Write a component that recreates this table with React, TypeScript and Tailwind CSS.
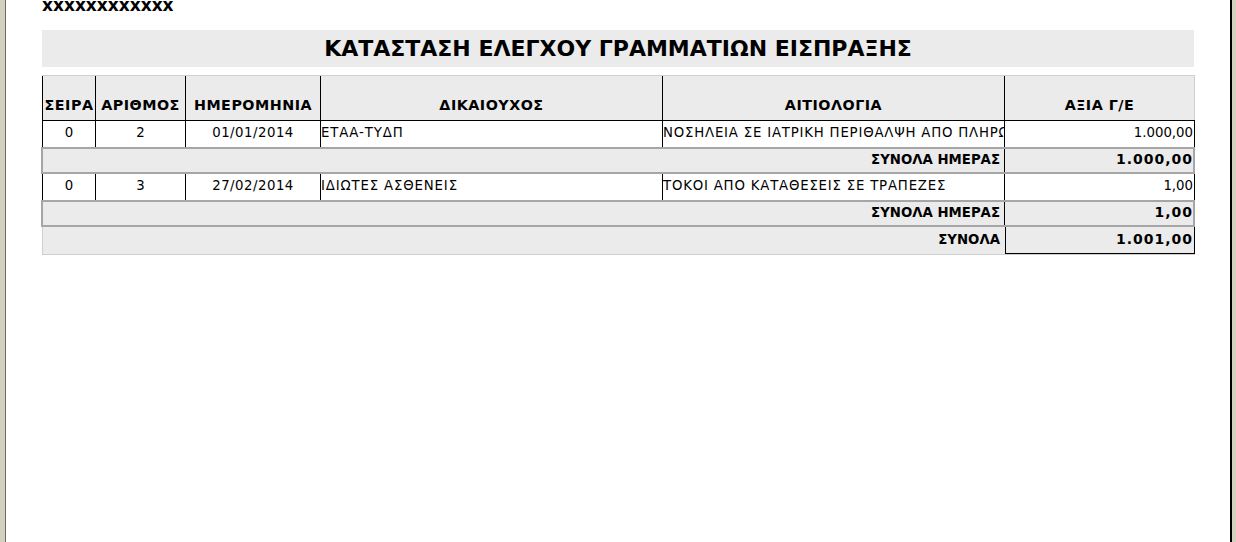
const cols = 'grid grid-cols-[54px_90px_135px_342px_342px_190px]';

type Row = {
  seira: string;
  arithmos: string;
  date: string;
  dikaiouxos: string;
  aitiologia: string;
  axia: string;
};

const rows: { item: Row; dayTotal: string }[] = [
  {
    item: {
      seira: '0',
      arithmos: '2',
      date: '01/01/2014',
      dikaiouxos: 'ΕΤΑΑ-ΤΥΔΠ',
      aitiologia: 'ΝΟΣΗΛΕΙΑ ΣΕ ΙΑΤΡΙΚΗ ΠΕΡΙΘΑΛΨΗ ΑΠΟ ΠΛΗΡΩΜΗ',
      axia: '1.000,00',
    },
    dayTotal: '1.000,00',
  },
  {
    item: {
      seira: '0',
      arithmos: '3',
      date: '27/02/2014',
      dikaiouxos: 'ΙΔΙΩΤΕΣ ΑΣΘΕΝΕΙΣ',
      aitiologia: 'ΤΟΚΟΙ ΑΠΟ ΚΑΤΑΘΕΣΕΙΣ ΣΕ ΤΡΑΠΕΖΕΣ',
      axia: '1,00',
    },
    dayTotal: '1,00',
  },
];

function HeaderRow() {
  const heads = ['ΣΕΙΡΑ', 'ΑΡΙΘΜΟΣ', 'ΗΜΕΡΟΜΗΝΙΑ', 'ΔΙΚΑΙΟΥΧΟΣ', 'ΑΙΤΙΟΛΟΓΙΑ', 'ΑΞΙΑ Γ/Ε'];
  return (
    <div className={`${cols} h-[45px] bg-[#ebebeb] border-t border-[#cfcfcf]`}>
      {heads.map((h, i) => (
        <div
          key={h}
          className={`flex items-end justify-center pb-[6px] text-[14.3px] font-bold tracking-[0.5px] whitespace-nowrap ${
            i === 0 ? 'border-l border-[#cfcfcf]' : ''
          } ${i === heads.length - 1 ? 'border-r border-[#cfcfcf]' : 'border-r border-black'}`}
        >
          {h}
        </div>
      ))}
    </div>
  );
}

function DataRow({ item, first }: { item: Row; first: boolean }) {
  return (
    <div className={`${cols} bg-white ${first ? 'h-[27px] border-t border-black' : 'h-[26px]'}`}>
      <div className="border-l border-r border-black text-center pt-[3px]">{item.seira}</div>
      <div className="border-r border-black text-center pt-[3px]">{item.arithmos}</div>
      <div className="border-r border-black text-center pt-[3px] tracking-[0.5px]">{item.date}</div>
      <div className="border-r border-black pt-[3px] overflow-hidden whitespace-nowrap tracking-[0.85px]">
        {item.dikaiouxos}
      </div>
      <div className="border-r border-black pt-[3px] overflow-hidden whitespace-nowrap tracking-[0.8px]">
        {item.aitiologia}
      </div>
      <div className="border-r border-black pt-[3px] pr-[1px] text-right">{item.axia}</div>
    </div>
  );
}

function SumRow({ label, value, last }: { label: string; value: string; last?: boolean }) {
  if (last) {
    return (
      <div className="flex h-[28px] bg-[#ebebeb] border-b border-l border-[#cfcfcf] font-bold">
        <div className="flex-1 text-right pr-[5px] pt-[4px]">{label}</div>
        <div className="w-[190px] border-l border-r border-b border-black text-right pr-[1px] pt-[4px] text-[14px] tracking-[1px]">
          {value}
        </div>
      </div>
    );
  }
  return (
    <div className="flex h-[27px] bg-[#ebebeb] border-y-2 border-x-2 border-[#a6a6a6] -ml-[1px] font-bold">
      <div className="flex-1 text-right pr-[4px] pt-[2px]">{label}</div>
      <div className="w-[189px] border-l border-black text-right pt-[2px] text-[14px] tracking-[1px]">{value}</div>
    </div>
  );
}

export default function App() {
  return (
    <div className="flex h-[542px] w-[1236px] overflow-hidden bg-[#d4d0c0] text-black [font-family:'DejaVu_Sans',Verdana,sans-serif]">
      <div className="ml-[5px] mr-[4px] flex-1 border-l border-[#6b6b63] border-r-2 border-r-black bg-white pl-[36px] pr-[35px]">
        <div className="-mt-[5px] text-[17px] font-bold leading-[20px]">xxxxxxxxxxxx</div>
        <div className="mt-[15px] mr-[1px] flex h-[37px] items-center justify-center bg-[#ebebeb] text-[22px] font-bold">
          ΚΑΤΑΣΤΑΣΗ ΕΛΕΓΧΟΥ ΓΡΑΜΜΑΤΙΩΝ ΕΙΣΠΡΑΞΗΣ
        </div>
        <div className="mt-[8px] text-[13.3px] leading-[17px]">
          <HeaderRow />
          {rows.map((r, i) => (
            <div key={i}>
              <DataRow item={r.item} first={i === 0} />
              <SumRow label="ΣΥΝΟΛΑ ΗΜΕΡΑΣ" value={r.dayTotal} />
            </div>
          ))}
          <SumRow label="ΣΥΝΟΛΑ" value="1.001,00" last />
        </div>
      </div>
    </div>
  );
}
